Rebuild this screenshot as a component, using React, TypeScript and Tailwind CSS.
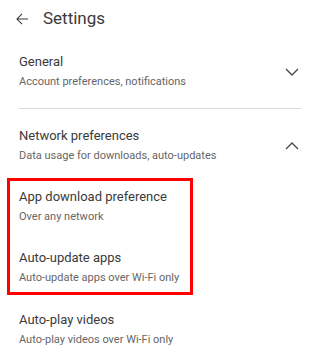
import React from 'react'

const font = { fontFamily: 'Roboto, "Noto Sans", sans-serif' }

function Chevron({ up }: { up?: boolean }) {
  return (
    <svg width="14" height="8" viewBox="0 0 14 8" className="shrink-0 mr-[21px]">
      <polyline
        points={up ? '1,7 7,1 13,7' : '1,1 7,7 13,1'}
        fill="none"
        stroke="#4a4a4a"
        strokeWidth="1.4"
      />
    </svg>
  )
}

function Item({ title, sub }: { title: string; sub: string }) {
  return (
    <div className="flex flex-col">
      <div className="text-[13px] leading-[20px] text-[#3a3a3a]">{title}</div>
      <div className="text-[11px] leading-[20px] text-[#666666]">{sub}</div>
    </div>
  )
}

export default function App() {
  return (
    <div className="w-[320px] h-[360px] bg-white overflow-hidden" style={font}>
      <div className="h-[38px] flex items-center pl-[13px]">
        <svg width="18" height="18" viewBox="0 0 24 24">
          <path d="M20 11.3H6.9l5.6-5.6-.95-.95L4.3 12l7.25 7.25.95-.95-5.6-5.6H20z" fill="#3a3a3a" />
        </svg>
        <span className="ml-[12px] text-[17px] text-[#3a3a3a]">Settings</span>
      </div>

      <div className="mt-[14px] pl-[19px] flex items-center justify-between">
        <Item title="General" sub="Account preferences, notifications" />
        <Chevron />
      </div>

      <div className="mt-[16px] mx-[19px] h-px bg-[#dadce0]" />

      <div className="mt-[17px] pl-[19px] flex items-center justify-between">
        <Item title="Network preferences" sub="Data usage for downloads, auto-updates" />
        <Chevron up />
      </div>

      <div className="mt-[12px] ml-[7px] w-[186px] border-[3px] border-[#ff0000] pl-[9px] pt-[6px] pb-[4px] flex flex-col gap-[21px]">
        <Item title="App download preference" sub="Over any network" />
        <Item title="Auto-update apps" sub="Auto-update apps over Wi-Fi only" />
      </div>

      <div className="mt-[15px] pl-[19px]">
        <Item title="Auto-play videos" sub="Auto-play videos over Wi-Fi only" />
      </div>
    </div>
  )
}
